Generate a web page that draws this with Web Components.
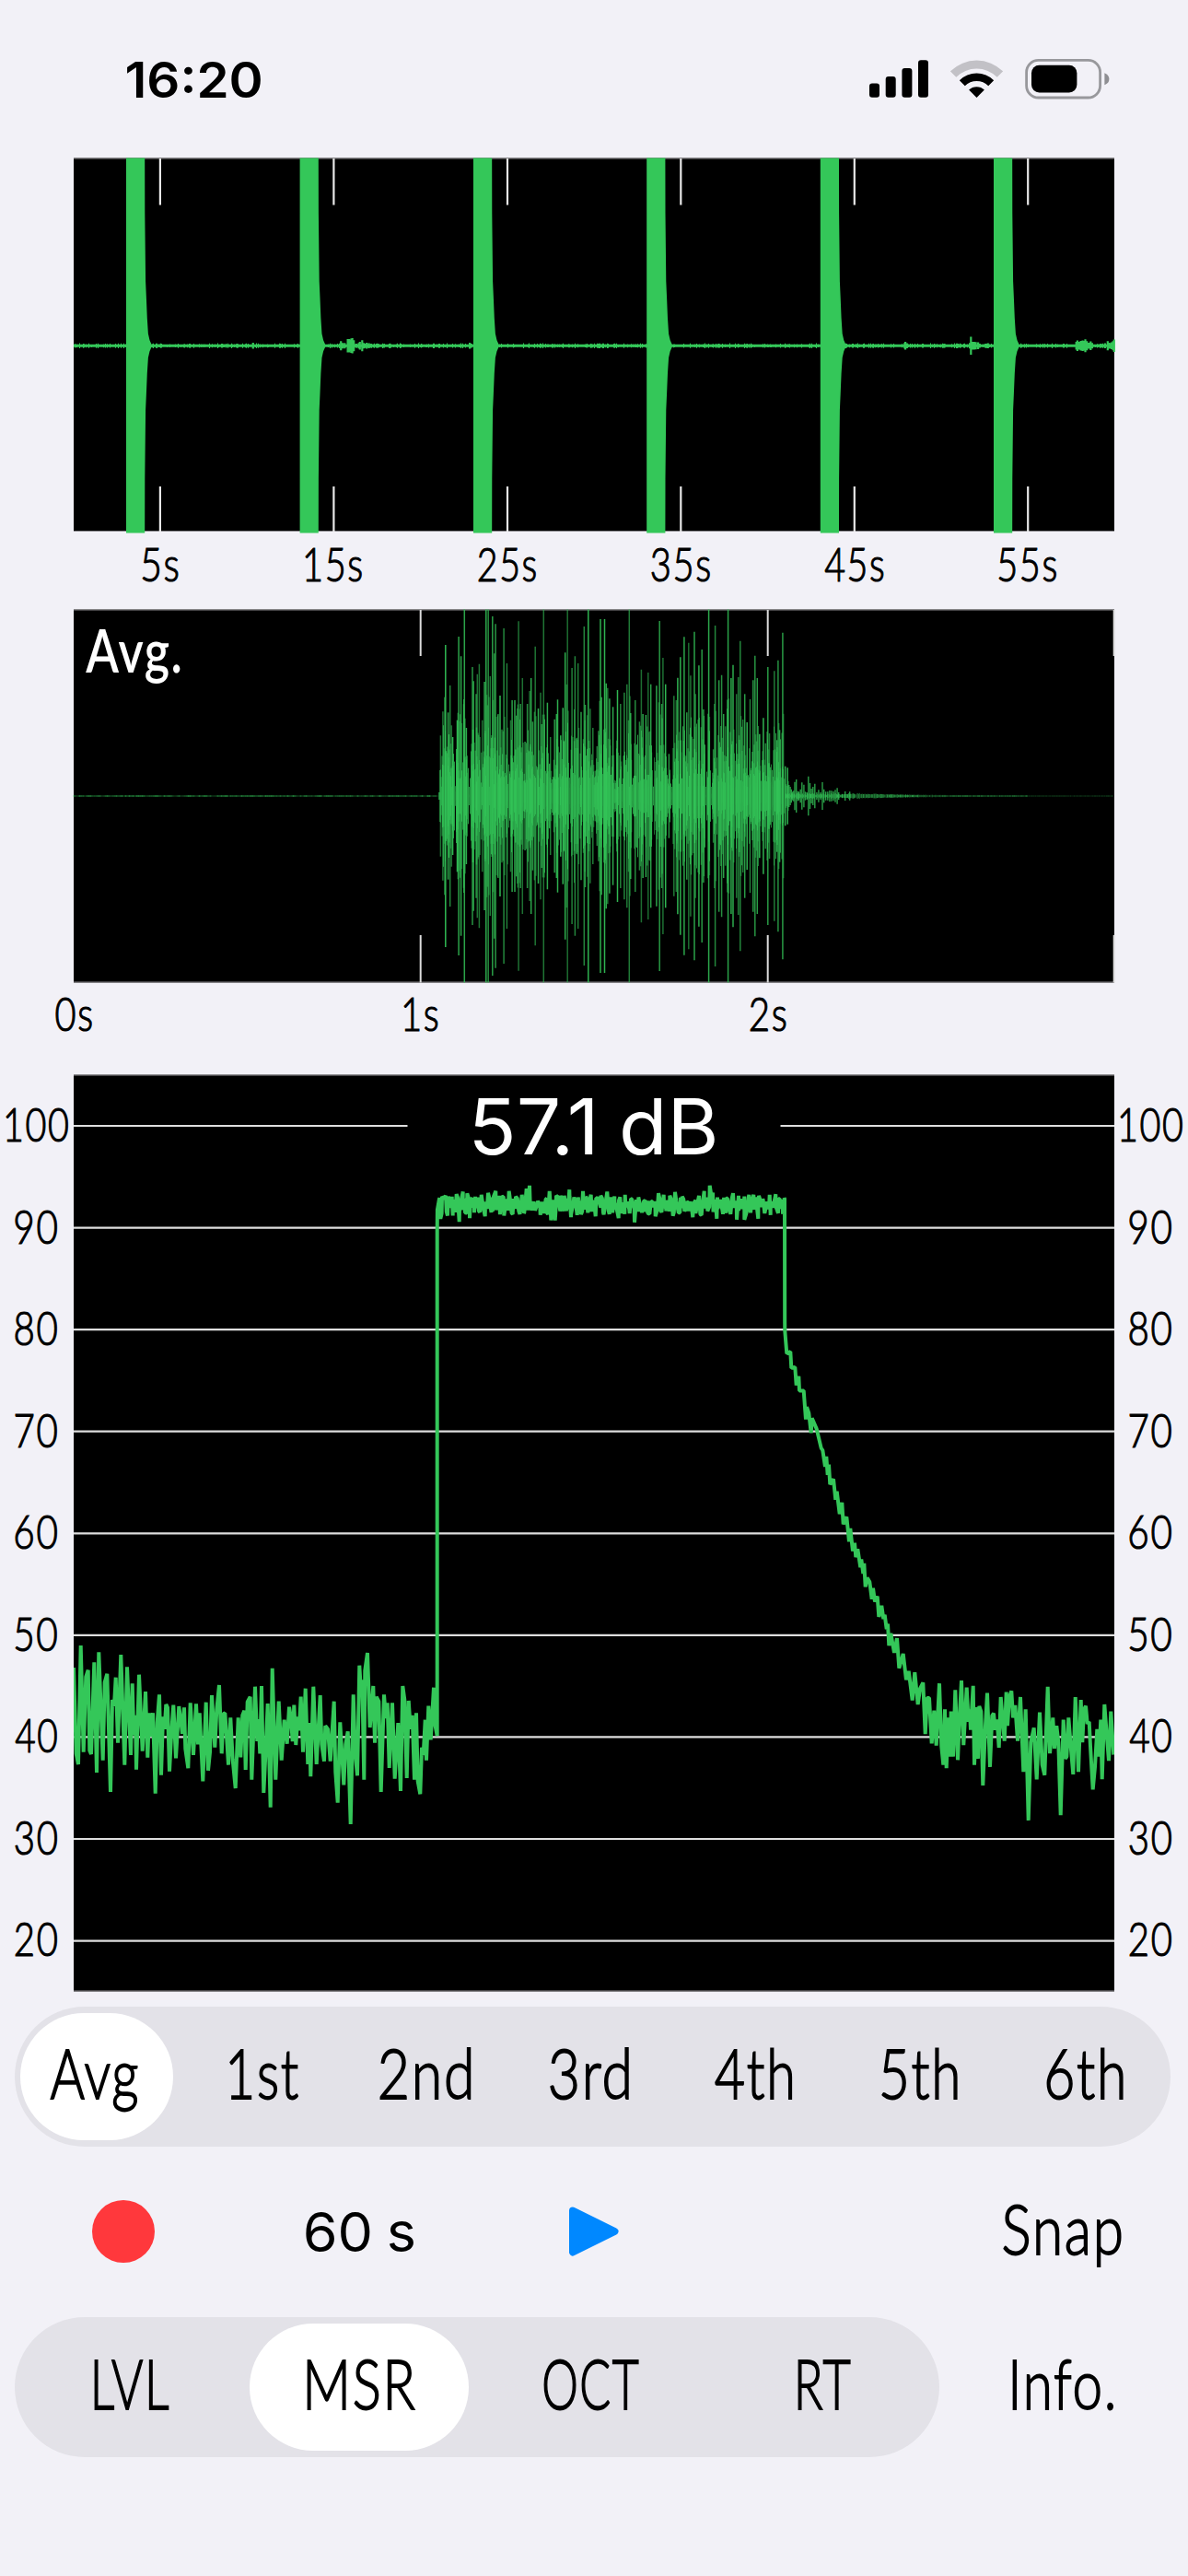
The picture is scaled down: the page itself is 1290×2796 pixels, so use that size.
<!DOCTYPE html>
<html lang="en">
<head>
<meta charset="utf-8">
<title>Reverberation measurement</title>
<style>
  html, body { margin: 0; padding: 0; background: #f2f1f7; }
  body { width: 1290px; height: 2796px; overflow: hidden; }
</style>
</head>
<body>
<msr-app></msr-app>
<script>
const GREEN = '#34c759';
const ctx = document.createElement('canvas').getContext('2d');

/* Seeded generator, so that the noise is the same on every load. */
function rng(seed) {
  return () => {
    seed = (seed * 1664525 + 1013904223) >>> 0;
    return seed / 4294967296;
  };
}
const pairs = s => s.trim().split(/\s+/).map(p => p.split(',').map(Number));

/* Text whose box is exactly its ink: cap = cap height, w = ink width. */
class FitText extends HTMLElement {
  connectedCallback() {
    const family = this.getAttribute('face') || 'Lato';
    const weight = this.getAttribute('weight') || '300';
    const cap = +this.getAttribute('cap');
    const w = +this.getAttribute('w');
    const ls = +(this.getAttribute('ls') || 0);
    const ws = +(this.getAttribute('ws') || 0);
    const text = this.getAttribute('text');
    const font = s => `${weight} ${s}px "${family}", "Liberation Sans", sans-serif`;
    ctx.font = font(200);
    ctx.letterSpacing = '0px';
    ctx.wordSpacing = '0px';
    const ratio = ctx.measureText('H').actualBoundingBoxAscent / 200;
    const fs = cap / ratio;
    const k = fs / 200;
    ctx.letterSpacing = ls * 200 + 'px';
    ctx.wordSpacing = ws * 200 + 'px';
    const m = ctx.measureText(text);
    const left = -m.actualBoundingBoxLeft * k;
    const ink = (m.actualBoundingBoxRight + m.actualBoundingBoxLeft) * k;
    const sx = w / ink;
    const base = cap / 2 + (m.fontBoundingBoxAscent - m.fontBoundingBoxDescent) * k / 2;
    const stroke = weight === '300' ? cap * .034 : 0;
    const root = this.attachShadow({ mode: 'open' });
    root.innerHTML = `<style>
      :host { display: block; flex: none; width: ${w}px; height: ${cap}px; overflow: visible; }
      span { display: block; width: max-content; white-space: pre; font: ${font(fs)}; line-height: ${cap}px;
        letter-spacing: ${ls}em; word-spacing: ${ws}em; font-kerning: normal; -webkit-text-stroke: ${stroke}px currentColor;
        transform-origin: 0 0; transform: translate(${-left * sx}px, ${cap - base}px) scaleX(${sx}); }
    </style><span></span>`;
    root.querySelector('span').textContent = text;
  }
}
customElements.define('fit-text', FitText);

class StatusBar extends HTMLElement {
  connectedCallback() {
    const cx = 28.5, cy = 41;
    const arc = (R, r) => {
      const q = Math.SQRT1_2;
      return `M${cx - R * q} ${cy - R * q}A${R} ${R} 0 0 1 ${cx + R * q} ${cy - R * q}L${cx + r * q} ${cy - r * q}A${r} ${r} 0 0 0 ${cx - r * q} ${cy - r * q}Z`;
    };
    this.attachShadow({ mode: 'open' }).innerHTML = `<style>
      :host { display: flex; box-sizing: border-box; height: 171px; padding: 65px 85px 0 138px; justify-content: space-between; align-items: flex-start; color: #000; }
      .icons { display: flex; }
      svg { display: block; }
      .sig { margin-right: 24px; }
      .wifi { margin-right: 24px; }
      .bat { margin-top: -1px; }
    </style>
    <fit-text face="Inter" weight="600" cap="39" w="145" text="16:20" style="margin-top:1.500px"></fit-text>
    <div class="icons">
      <svg class="sig" width="64" height="42" viewBox="0 0 64 42">
        <rect x="0" y="25.5" width="11" height="15.3" rx="3"/><rect x="17.7" y="18" width="11" height="22.8" rx="3"/>
        <rect x="35.4" y="9" width="11" height="31.8" rx="3"/><rect x="53" y=".2" width="11" height="40.6" rx="3"/>
      </svg>
      <svg class="wifi" width="57" height="42" viewBox="0 0 57 42">
        <path d="${arc(40.4, 31.4)}" fill="#c2c1c6"/>
        <path d="${arc(26.4, 18)}"/>
        <path d="M${cx} ${cy}L${cx - 8.4} ${cy - 8.4}A12 12 0 0 1 ${cx + 8.4} ${cy - 8.4}Z"/>
      </svg>
      <svg class="bat" width="92" height="44" viewBox="0 0 92 44">
        <rect x="1.6" y="1.4" width="80" height="40.6" rx="13" fill="none" stroke="#98989c" stroke-width="2.8"/>
        <rect x="7" y="6.8" width="49.4" height="29.6" rx="8.5"/>
        <path d="M86.400 15.200q5 2 5 6.500t-5 6.500z" fill="#8e8e92"/>
      </svg>
    </div>`;
  }
}
customElements.define('status-bar', StatusBar);

/* One minute of recorded level, mirrored around the centre line. */
class OverviewChart extends HTMLElement {
  connectedCallback() {
    const r = rng(7), mid = 204.3, k = 2.431;
    const bars = [57, 245.6, 434, 622.2, 810.8, 999];
    const ticks = [93.9, 282.4, 471, 659.3, 847.8, 1036.2];
    let d = '';
    for (let x = 0; x < 1130; x++) {
      const h = 1.5 + (r() > .6 ? r() * 1.2 : 0);
      d += `M${x + .5} ${(mid - h).toFixed(1)}V${(mid + h).toFixed(1)}`;
    }
    const bumps = pairs(`668,637 900,632 904,638 910,638 918,625 921,625 924,628 927,624 930,622 934,629 940,640 947,638 950,634 956,629 960,638 968,637 974,639 980,640 1240,637 1244,640`)
      .map(([x, y]) => [x / k - 80, (647 - y) / 3])
      .concat(pairs(`820,638 822,634 826,639 925,640 992,638 995,618 998,634 1003,634 1008,635 1014,636 1018,640 1037,640 1040,639 1273,634 1276,630 1281,634 1285,631 1290,630 1294,631 1297,626 1301,632 1306,637 1311,633 1315,638 1340,641 1349,639 1356,632 1360,637 1366,636 1370,632 1373,627`)
      .map(([x, y]) => [565 + x / k, (647 - y) / 3]));
    const bp = bumps.map(([x, h]) => `M${x.toFixed(1)} ${(mid - h).toFixed(1)}V${(mid + h).toFixed(1)}`).join('');
    const tail = [[20.3, 144], [21.1, 70], [21.9, 52], [22.8, 30], [23.9, 13], [25.5, 6], [27.5, 1.5]];
    const bs = bars.map(x => {
      const up = tail.map(([a, h]) => `L${x + a} ${mid - h}`).join('');
      const dn = tail.slice().reverse().map(([a, h]) => `L${x + a} ${mid + h}`).join('');
      return `M${x} .5H${x + 20.2}${up}${dn}L${x + 20.2} 407.500H${x}Z`;
    }).join('');
    this.attachShadow({ mode: 'open' }).innerHTML = `<style>
      :host { display: block; height: 490px; }
      svg { display: block; margin-left: 80px; overflow: visible; }
      .axis { display: flex; margin: 17.500px 0 0 79.600px; }
      .axis div { width: 188.450px; display: flex; justify-content: center; flex: none; }
    </style>
    <svg width="1130" height="406" viewBox="0 0 1130 406">
      <rect y=".5" width="1130" height="405.500" fill="#000"/>
      <path d="M0 1H1130M0 405.500H1130" stroke="#8d8c90" stroke-width="1.200"/>
      <path d="${ticks.map(x => `M${x} 1V51.500M${x} 357V406`).join('')}" stroke="#e8e8e8" stroke-width="2.200"/>
      <path d="${d}" stroke="${GREEN}" stroke-width="1.100"/>
      <path d="${bp}" stroke="${GREEN}" stroke-width="2.200"/>
      <path d="${bs}" fill="${GREEN}"/>
    </svg>
    <div class="axis">${[['5s', 38], ['15s', 60.5], ['25s', 61.5], ['35s', 62.5], ['45s', 63], ['55s', 61.5]]
      .map(([t, w]) => `<div><fit-text cap="36.600" w="${w}" ls=".04" text="${t}"></fit-text></div>`).join('')}</div>`;
  }
}
customElements.define('overview-chart', OverviewChart);

/* Averaged burst, three seconds wide. */
class BurstChart extends HTMLElement {
  connectedCallback() {
    const r = rng(41), mid = 203, k = 2.431;
    const spikes = pairs(`1163,445 1169,367 1176,150 1183,370 1188,282 1192,412 1195,450 1207,395 1211,123 1217,187 1226,34 1231,420 1247,222 1250,268 1257,310 1260,245 1265,212 1273,395 1279,270 1283,34 1289,34 1294,252 1300,57 1305,178 1308,82 1315,375 1320,315 1325,425 1330,96 1338,210 1348,395 1352,330 1359,330 1363,380 1369,73 1374,342 1379,258 1386,465 1392,342 1398,300 1402,258 1406,400 1413,155 1421,357 1427,305 1430,408 1435,34 1445,338 1453,450 1464,392 1469,375 1472,328 1480,445 1486,355 1492,175 1498,34 1510,225 1518,187 1526,210 1534,368 1542,90 1545,345 1553,34 1558,358 1565,420`)
      .map(([x, y]) => [x / k - 80, (642 - y) / 3])
      .concat(pairs(`3,560 8,480 12,430 17,66 20,320 28,66 32,275 36,290 41,325 50,352 57,600 62,297 70,342 80,305 87,278 93,34 97,372 109,330 120,400 125,230 129,375 137,378 143,240 150,278 165,283 173,72 179,342 182,192 189,278 198,505 211,316 217,330 221,257 228,190 238,124 245,370 250,143 255,250 265,107 268,310 277,217 285,165 289,360 303,34 315,490 320,87 330,265 337,248 342,375 347,415 354,34 362,258 367,215 376,310 381,255 386,137 393,393 398,310 404,402 412,327 420,265 425,185 431,258 437,440 447,388 453,470 459,222 463,438 476,235 483,460 486,200 490,427 498,110 505,545 511,550`)
      .map(([x, y]) => [565 + x / k, (642 - y) / 3]));
    const line = (x, h, o, w = 1) => {
      h = Math.min(h, 202.5);
      return `<path d="M${x.toFixed(1)} ${(mid - h).toFixed(1)}V${(mid + h).toFixed(1)}" stroke-opacity="${o.toFixed(2)}" stroke-width="${w}"/>`;
    };
    let s = line(397, 4, .85, 1.5);
    /* The core follows the spikes near it. */
    for (let x = 398.5; x < 771; x++) {
      const near = spikes.filter(p => Math.abs(p[0] - x) < 2.6);
      const avg = near.length ? near.reduce((a, p) => a + p[1], 0) / near.length : 12;
      let h = 6 + Math.min(avg, 130) * (.1 + r() * r() * .75);
      if (r() < .1) h *= .4;
      s += line(x, Math.max(h, 10), .55 + r() * .24, 1.05);
      s += line(x, h * .45, .12, 1.1);
    }
    spikes.forEach(([x, h]) => {
      s += line(x, h, .55 + r() * .38, 1.5);
      s += line(x - .8, h * (.3 + r() * .3), .55, 1.5);
      s += line(x + .8, h * (.25 + r() * .3), .45, 1.5);
    });
    const tail = pairs(`515,606 518,612 521,620 524,628 527,625 530,596 534,588 538,626 541,628 545,620 549,598 554,605 558,628 562,630 566,578 570,600 574,618 578,612 583,602 588,630 593,622 598,630 603,597 607,620 612,628 617,628 622,624 627,625 632,627 637,622 642,616 646,630 655,636 663,627 669,636 675,628`)
      .map(([x, y]) => [565 + x / k, (642 - y) / 3]);
    tail.forEach(([x, h]) => { s += line(x, h, .8, 1.4); });
    for (let x = 773; x < 1129; x++) {
      const h = x < 850 ? 3 : .8 + 2.3 * Math.exp(-(x - 850) / 50) * (.5 + r() * .6);
      const fade = x < 920 ? .75 : x < 1036 ? .5 : .25;
      s += line(x + .5, x < 850 ? h * (.4 + r() * .6) : h, fade * (.5 + r() * .5), 1.05);
    }
    for (let x = 0; x < 396; x += 2) s += line(x + .5, .9, .22 + r() * .42, 2);
    this.attachShadow({ mode: 'open' }).innerHTML = `<style>
      :host { display: block; position: relative; height: 505px; }
      svg { display: block; margin-left: 80px; overflow: visible; }
      .tag { position: absolute; left: 93px; top: 20.500px; color: #fff; }
      .axis { display: flex; margin: 15.500px 0 0 -108.400px; }
      .axis div { width: 376.800px; display: flex; justify-content: center; flex: none; }
    </style>
    <svg width="1130" height="406" viewBox="0 0 1130 406">
      <rect y=".5" width="1130" height="405" fill="#000"/>
      <path d="M0 .8H1130M0 405H1130" stroke="#8d8c90" stroke-width="1.200"/>
      <path d="M376.700 1V51M376.700 354V405.500M753.700 1V51M753.700 354V405.500M1129.700 1V51M1129.700 354V405.500" stroke="#dcdcdc" stroke-width="2"/>
      <g fill="none" stroke="${GREEN}">${s}</g>
    </svg>
    <fit-text class="tag" weight="600" cap="47.500" w="102.500" ls=".03" text="Avg."></fit-text>
    <div class="axis">${[['0s', 38.3], ['1s', 36], ['2s', 38]]
      .map(([t, w]) => `<div><fit-text cap="36.600" w="${w}" ls=".04" text="${t}"></fit-text></div>`).join('')}</div>`;
  }
}
customElements.define('burst-chart', BurstChart);

/* Level over time in dB. */
class LevelChart extends HTMLElement {
  connectedCallback() {
    const a = pairs(`240,180 248,460 255,495 263,108 272,455 280,210 287,188 292,450 297,462 307,163 315,522 322,130 335,482 341,228 349,200 360,585 366,285 372,305 377,212 384,425 394,138 406,497 414,178 426,465 431,232 436,400 441,335 444,512 453,203 464,452 474,258 481,473 486,328 491,405 498,328 506,590 512,360 519,268 525,530 531,340 536,380 541,300 546,310 552,518 558,400 565,302 573,475 583,306 588,345 594,395 600,310 604,445 613,508 620,295 630,465 639,298 645,430 650,328 661,550 671,293 678,515 684,455 690,270 700,440 706,318 714,237 722,460 728,330 733,328 738,400 744,497 751,343 758,480 767,573 776,343 784,472 790,335 796,320 800,513 806,292 815,275 820,545 831,242 838,420 842,348 847,460 852,240 859,588 866,440 872,297 881,635 887,182 898,545 908,290 917,482 926,350 935,428 942,308 948,345 953,420 958,302 964,432 970,340 974,385 980,275 987,455 995,248 1003,495 1008,360 1012,535 1021,242 1031,495 1043,270 1048,430 1056,485 1060,370 1068,380 1076,485 1088,290 1093,520 1100,620 1108,358 1120,562 1126,430 1133,388 1142,690 1151,268 1157,460 1164,532 1171,173 1176,262 1180,220 1186,545 1189,190 1197,132 1205,375 1216,240 1221,425 1226,275 1234,290 1241,585 1251,268 1257,345 1262,295 1268,507 1278,295 1286,542 1297,360 1305,582 1312,240 1318,285 1325,540 1331,288 1337,380 1343,335 1350,545 1356,328 1361,550 1369,592 1374,440 1379,465 1385,350 1389,482 1396,305 1403,415 1413,245 1417,365 1424,402`)
      .map(([x, y]) => [x / 3 - 80, 584 + y / 3]);
    const hi = pairs(`50,430 60,418 72,415 92,418 107,410 128,402 142,407 153,420 168,418 188,412 210,406 222,420 235,400 247,415 260,418 278,400 300,418 320,412 335,392 345,382 372,432 398,425 410,400 432,415 446,415 458,415 475,395 490,420 503,420 519,400 530,420 545,412 562,422 577,415 598,402 622,417 640,420 656,412 675,425 700,420 722,430 745,435 765,407 782,412 802,415 819,403 842,418 862,437 886,430 897,415 914,400 932,382 942,405 957,420 985,422 1008,407 1026,415 1045,417 1060,412 1075,412 1092,415 1105,425 1127,412 1147,410 1160,425 1175,423`);
    const lo = pairs(`55,490 78,480 95,480 116,500 135,470 150,488 165,470 180,465 200,482 225,465 245,460 262,480 290,475 310,465 328,470 352,462 380,478 400,468 415,495 428,495 445,465 465,465 480,485 500,478 517,465 535,470 560,482 585,470 605,475 635,488 655,475 670,460 687,502 710,462 730,472 755,482 770,460 790,465 812,480 835,470 850,465 877,485 905,478 925,465 955,490 975,475 1000,475 1020,493 1045,493 1065,470 1090,490 1110,465 1130,478 1155,472 1170,475`);
    const core = [];
    const r = rng(3);
    for (let x = 52, i = 0; x < 1172; x += 4.5 + r() * 4, i++) {
      const dip = x > 350 && x < 395 ? 6 : x > 700 && x < 760 || x > 850 && x < 885 ? 9 : 0;
      core.push([x, i % 2 ? 450 + r() * 27 : 417 + dip + r() * 20]);
    }
    const b = hi.concat(lo, core).sort((p, q) => p[0] - q[0]).map(([x, y]) => [380 + x / 3, -6.5 + y / 3]);
    const c = pairs(`187,100 193,155 205,150 208,190 220,188 224,232 232,210 234,245 248,245 255,315 258,285 265,300 272,348 275,312 290,338 305,385 310,390 318,430 322,405 326,450 330,425 334,473 345,460 352,510 356,490 365,545 373,517 377,570 388,552 396,612 400,580 408,635 414,615 418,650 424,630 433,675 436,655 442,690 445,665 449,722 455,700 463,710 470,752 474,725 480,758 488,745 493,795 502,768 508,800 512,790 518,825 522,812 526,865 532,835 543,882 552,847 559,920 572,885 582,948 590,927 602,998 610,930 620,1008 627,970 637,955 644,1080 650,992 657,992 665,1103 673,1023 680,1108 690,957 697,1110 703,1155 708,1020 713,1163 719,1040 725,1135 728,1025 735,1135 742,973 750,1143 755,1050 762,950 769,1107 779,967 785,1050 789,1020 792,1070 800,963 804,1155 812,1015 816,1140 820,1012 826,1025 832,1205 840,1060 846,980 855,1160 862,1035 867,1030 872,1070 878,1045 884,1113 890,990 902,1097 908,978 912,1060 918,990 925,975 930,1040 937,1010 945,1097 954,990 964,1172 971,1020 980,1290 988,1100 998,1065 1007,1190 1017,1027 1025,1155 1033,1180 1043,965 1050,1127 1060,1040 1065,1115 1072,1060 1078,1100 1085,1277 1094,1045 1100,1140 1105,1135 1111,1040 1118,1110 1126,1178 1133,990 1143,1172 1151,997 1156,1100 1161,1020 1167,1012 1172,1055 1178,1050 1182,1110 1190,1215 1197,1160 1204,1068 1210,1135 1216,1045 1220,1190 1228,1008 1235,1080 1242,1145 1249,1025 1258,1130`)
      .map(([x, y]) => [710 + x / 3, 234 + y / 2.24]);
    const pts = a.concat([[394.7, 170], [394.9, 147]], b, [[772, 135], [772.2, 270]], c)
      .map(p => p[0].toFixed(1) + ',' + p[1].toFixed(1)).join(' ');
    let grid = 'M0 56H362.500M767.500 56H1130';
    for (let i = 1; i < 9; i++) grid += `M0 ${(56 + i * 110.57).toFixed(2)}H1130`;
    const labels = [100, 90, 80, 70, 60, 50, 40, 30, 20]
      .map(v => `<div><fit-text cap="36.600" w="${v === 100 ? 66.5 : 44.5}" ls=".04" text="${v}"></fit-text></div>`).join('');
    this.attachShadow({ mode: 'open' }).innerHTML = `<style>
      :host { display: flex; position: relative; height: 1011px; }
      .col { width: 79px; flex: none; display: flex; flex-direction: column; }
      .col.l { padding-right: 1px; }
      .col div { height: 110.570px; flex: none; display: flex; align-items: center; justify-content: center; }
      .col div:first-child { padding-left: 2px; }
      svg { display: block; flex: none; }
      .val { position: absolute; left: 515px; top: 26px; color: #fff; }
    </style>
    <div class="col l">${labels}</div>
    <svg width="1130" height="996" viewBox="0 0 1130 996">
      <rect y=".5" width="1130" height="995" fill="#000"/>
      <path d="M0 .9H1130M0 995H1130" stroke="#8d8c90" stroke-width="1.200"/>
      <path d="${grid}" stroke="#dedede" stroke-width="2.200"/>
      <polyline points="${pts}" fill="none" stroke="${GREEN}" stroke-width="4" stroke-linejoin="bevel"/>
    </svg>
    <div class="col">${labels}</div>
    <fit-text class="val" face="Inter" weight="400" cap="61.300" w="261" ws="-.03" text="57.1 dB"></fit-text>`;
  }
}
customElements.define('level-chart', LevelChart);

/* items = "label:width:shift", separated by spaces; sel = index of the selected one. */
class SegmentedControl extends HTMLElement {
  connectedCallback() {
    const sel = +this.getAttribute('sel');
    const items = this.getAttribute('items').split(' ').map(s => s.split(':'));
    this.attachShadow({ mode: 'open' }).innerHTML = `<style>
      :host { display: flex; flex: none; box-sizing: border-box; height: 152.500px; border-radius: 77px; background: #e3e2e8; }
      .seg { flex: 1 1 0; display: flex; align-items: center; justify-content: center; position: relative; margin: 7px 6.500px; border-radius: 70px; }
      .on { background: #fff; }
      .seg.on:not(:first-of-type) { margin: 7px 8.500px 7px 4.500px; }
      fit-text { position: relative; top: -2.500px; }
    </style>${items.map(([t, w, dx], i) =>
      `<div class="seg${i === sel ? ' on' : ''}"><fit-text cap="53.500" w="${w}" ls=".03" text="${t}" style="left:${dx}px"></fit-text></div>`).join('')}`;
  }
}
customElements.define('segmented-control', SegmentedControl);

class TransportRow extends HTMLElement {
  connectedCallback() {
    this.attachShadow({ mode: 'open' }).innerHTML = `<style>
      :host { display: flex; align-items: center; height: 184.500px; padding-left: 99.500px; }
      svg { display: block; flex: none; }
      .rec { margin-right: 164.500px; }
      .play { margin: 0 418px 0 168px; }
      .snap { margin-top: -4px; }
    </style>
    <svg class="rec" width="68" height="68" viewBox="0 0 68 68"><circle cx="34" cy="34" r="34" fill="#ff383c"/></svg>
    <fit-text face="Inter" weight="400" cap="43.500" w="117" ws="-.04" text="60 s"></fit-text>
    <svg class="play" width="55" height="54" viewBox="0 0 55 54"><path d="M5 4.500L50.500 27L5 49.500Z" fill="#08f" stroke="#08f" stroke-width="8" stroke-linejoin="round"/></svg>
    <fit-text class="snap" cap="53.500" w="127" ls=".03" text="Snap"></fit-text>`;
  }
}
customElements.define('transport-row', TransportRow);

class MsrApp extends HTMLElement {
  connectedCallback() {
    this.attachShadow({ mode: 'open' }).innerHTML = `<style>
      :host { display: flex; flex-direction: column; width: 1290px; height: 2796px; background: #f2f1f7; color: #000; overflow: hidden; }
      .takes { margin: .5px 19px 0 15.500px; }
      .modes { display: flex; align-items: center; padding-left: 15.500px; }
      .modes segmented-control { width: 1004px; margin-right: 80.500px; }
      .info { margin-top: -5px; }
    </style>
    <status-bar></status-bar>
    <overview-chart></overview-chart>
    <burst-chart></burst-chart>
    <level-chart></level-chart>
    <segmented-control class="takes" sel="0" items="Avg:94:-3 1st:73.5:2 2nd:97.5:-2 3rd:84:-3 4th:82.5:-4 5th:81:-3 6th:82:-3"></segmented-control>
    <transport-row></transport-row>
    <div class="modes">
      <segmented-control sel="1" items="LVL:80:1.5 MSR:116:1.5 OCT:102:-1 RT:56:1"></segmented-control>
      <fit-text class="info" cap="53.500" w="108.500" ls=".03" text="Info."></fit-text>
    </div>`;
  }
}
customElements.define('msr-app', MsrApp);
</script>
</body>
</html>
